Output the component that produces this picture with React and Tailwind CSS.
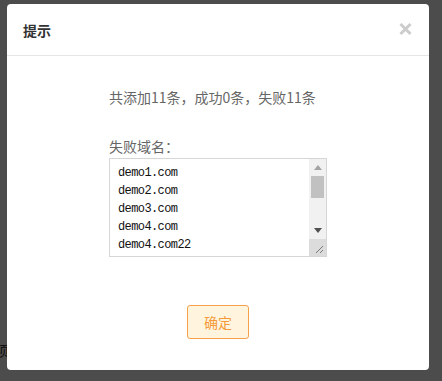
export default function App() {
  const lines = ["demo1.com", "demo2.com", "demo3.com", "demo4.com", "demo4.com22"];
  const cjk = { fontFamily: '"Microsoft YaHei", "Noto Sans CJK SC", "Noto Sans", sans-serif' };
  return (
    <div className="relative h-[381px] w-[442px] overflow-hidden bg-[#4c4c4c]" style={cjk}>
      <span className="absolute left-[-5px] top-[341px] text-[14px] leading-[18px] text-[#111]">项目</span>
      <div className="absolute left-[7px] top-[4px] flex h-[366px] w-[422px] flex-col rounded-[4px] bg-white">
        <div className="flex h-[52px] shrink-0 items-center justify-between border-b border-[#e5e5e5] pl-[16px] pr-[17px]">
          <span className="text-[14px] font-semibold leading-[20px] text-[#333]">提示</span>
          <svg width="13" height="14" viewBox="0 0 13 14" className="mt-[-1px]">
            <path d="M1.5 2 L11.5 12 M11.5 2 L1.5 12" stroke="#cccccc" strokeWidth="3" strokeLinecap="butt" />
          </svg>
        </div>
        <div className="flex flex-col items-center">
          <div className="flex w-[218px] flex-col pt-[31px]">
            <p className="whitespace-nowrap text-[14px] leading-[20px] text-[#666]">共添加11条，成功0条，失败11条</p>
            <p className="mt-[29px] text-[14px] leading-[20px] text-[#666]">失败域名：</p>
            <div className="mt-[2px] flex h-[99px] w-[218px] border border-[#d6d6d6] bg-white">
              <div
                className="flex-1 overflow-hidden pl-[8px] pt-[5px] text-[12px] leading-[18px] tracking-[-0.6px] text-[#111]"
                style={{ fontFamily: '"Liberation Mono", "DejaVu Sans Mono", monospace' }}
              >
                {lines.map((l) => (
                  <div key={l}>{l}</div>
                ))}
              </div>
              <div className="flex w-[17px] flex-col bg-[#f1f1f1]">
                <div className="flex h-[17px] items-center justify-center">
                  <svg width="8" height="5" viewBox="0 0 8 5"><path d="M4 0 L8 5 L0 5 Z" fill="#a3a3a3" /></svg>
                </div>
                <div className="mx-auto h-[22px] w-[13px] bg-[#c1c1c1]" />
                <div className="flex-1" />
                <div className="flex h-[17px] items-center justify-center">
                  <svg width="8" height="5" viewBox="0 0 8 5"><path d="M0 0 L8 0 L4 5 Z" fill="#505050" /></svg>
                </div>
                <div className="flex h-[17px] items-end justify-end bg-[#dcdcdc] pb-[2px] pr-[2px]">
                  <svg width="10" height="10" viewBox="0 0 10 10">
                    <path d="M9 2 L2 9 M9 6 L6 9" stroke="#777" strokeWidth="1" />
                  </svg>
                </div>
              </div>
            </div>
          </div>
          <button className="mt-[48px] flex h-[34px] w-[62px] items-center justify-center rounded-[3px] border border-[#f7a04a] bg-[#fff5df] text-[14px] text-[#f59a3a]">
            确定
          </button>
        </div>
      </div>
    </div>
  );
}
